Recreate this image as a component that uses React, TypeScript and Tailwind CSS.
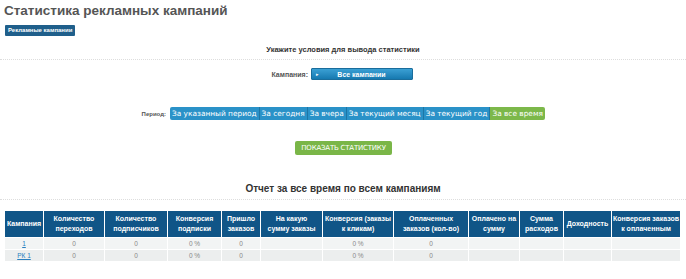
const periods = [
  { label: 'За указанный период', active: false },
  { label: 'За сегодня', active: false },
  { label: 'За вчера', active: false },
  { label: 'За текущий месяц', active: false },
  { label: 'За текущий год', active: false },
  { label: 'За все время', active: true },
];

// header titles split into the two lines shown in the report
const columns = [
  { lines: ['Кампания'], w: 'w-[39px]' },
  { lines: ['Количество', 'переходов'], w: 'w-[61px]' },
  { lines: ['Количество', 'подписчиков'], w: 'w-[63px]' },
  { lines: ['Конверсия', 'подписки'], w: 'w-[54px]' },
  { lines: ['Пришло', 'заказов'], w: 'w-[39px]' },
  { lines: ['На какую', 'сумму заказы'], w: 'w-[62px]' },
  { lines: ['Конверсия (заказы', 'к кликам)'], w: 'w-[71px]' },
  { lines: ['Оплаченных', 'заказов (кол-во)'], w: 'w-[75px]' },
  { lines: ['Оплачено на', 'сумму'], w: 'w-[51px]' },
  { lines: ['Сумма', 'расходов'], w: 'w-[44px]' },
  { lines: ['Доходность'], w: 'w-[48px]' },
  { lines: ['Конверсия заказов', 'к оплаченным'], w: 'w-[69px]' },
];

const rows = [
  ['1', '0', '0', '0 %', '0', '', '0 %', '0', '', '', '', ''],
  ['РК 1', '0', '0', '0 %', '0', '', '0 %', '0', '', '', '', ''],
];

export default function App() {
  return (
    <div className="w-[686px] h-[279px] overflow-hidden bg-white font-['Liberation_Sans',Arial,sans-serif] text-[#333] leading-none">
      <h1 className="pl-[4px] pt-[3px] text-[13.5px] leading-[16px] font-bold text-[#555]">Статистика рекламных кампаний</h1>

      <div className="flex pl-[5px] pt-[6px]">
        <button className="h-[11px] px-[3px] bg-[#1f5f8b] text-white text-[6px] font-bold leading-[11px] rounded-[1px]">
          Рекламные кампании
        </button>
      </div>

      <div className="pt-[9px] text-center text-[7.5px] font-bold leading-[10px] text-[#333]">
        Укажите условия для вывода статистики
      </div>
      <div className="mt-[4px] border-t border-dotted border-[#ddd]" />

      <div className="mt-[8px] flex items-center">
        <div className="w-[308px] text-right text-[7px] font-bold text-[#555]">Кампания:</div>
        <div className="ml-[3px] w-[102px] h-[12px] flex items-center bg-gradient-to-b from-[#3aa0d4] to-[#1579b0] rounded-[1px] border border-[#1a6d9c]">
          <span className="ml-[4px] text-white text-[5px] leading-none">▸</span>
          <span className="flex-1 text-center text-white text-[7px] font-bold pr-[8px]">Все кампании</span>
        </div>
      </div>

      <div className="mt-[27px] flex items-center">
        <div className="w-[166px] text-right text-[6px] font-bold text-[#555]">Период:</div>
        <div className="ml-[4px] flex h-[13px] rounded-[2px] overflow-hidden font-['DejaVu_Sans',Verdana,sans-serif]">
          {periods.map((p, i) => (
            <span
              key={p.label}
              className={`px-[2px] text-[7.4px] leading-[13px] text-white whitespace-nowrap ${
                p.active ? 'bg-[#7cb84a]' : 'bg-[#2a92c8]'
              } ${i > 0 ? 'border-l border-[#1d76a6]' : ''}`}
            >
              {p.label}
            </span>
          ))}
        </div>
      </div>

      <div className="mt-[21px] flex justify-center">
        <button className="ml-[1px] h-[14px] px-[6px] bg-[#7ab648] rounded-[2px] text-white text-[7px] leading-[14px] font-['DejaVu_Sans',Verdana,sans-serif] tracking-[-0.2px]">
          ПОКАЗАТЬ СТАТИСТИКУ
        </button>
      </div>

      <div className="mt-[28px] text-center text-[10px] font-bold leading-[12px] text-[#333]">
        Отчет за все время по всем кампаниям
      </div>
      <div className="mt-[4px] border-t border-dotted border-[#ddd]" />

      <div className="pl-[4px] pt-[10px]">
        <table className="table-fixed border-collapse w-[676px]">
          <thead>
            <tr>
              {columns.map((c) => (
                <th
                  key={c.lines[0]}
                  className={`${c.w} h-[27px] bg-[#105587] border border-white px-0 text-[7px] leading-[10px] font-bold text-white text-center align-middle whitespace-nowrap overflow-hidden`}
                >
                  {c.lines.map((l) => (
                    <div key={l}>{l}</div>
                  ))}
                </th>
              ))}
            </tr>
          </thead>
          <tbody>
            {rows.map((r, ri) => (
              <tr key={ri} className={ri % 2 === 0 ? 'bg-[#f2f4f4]' : 'bg-[#eceeee]'}>
                {r.map((cell, ci) => (
                  <td key={ci} className="h-[12px] border border-white text-center text-[6.5px] leading-[11px] text-[#888]">
                    {ci === 0 ? <a className="text-[#2a7fbf] underline">{cell}</a> : cell}
                  </td>
                ))}
              </tr>
            ))}
          </tbody>
        </table>
      </div>
    </div>
  );
}
